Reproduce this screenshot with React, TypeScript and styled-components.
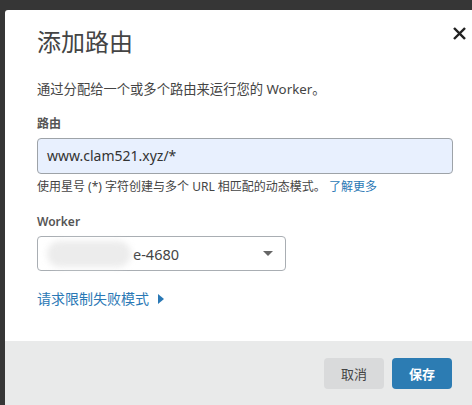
import styled, { createGlobalStyle } from "styled-components"

const Global = createGlobalStyle`
  html, body {
    margin: 0;
    padding: 0;
    background: #333;
    width: 472px;
    height: 405px;
    overflow: hidden;
  }
  * { box-sizing: border-box; }
`;

const Backdrop = styled.div`
  width: 472px;
  height: 405px;
  padding: 10px 0 0 5px;
  background: #363636;
  font-family: "Noto Sans", "Noto Sans CJK SC", sans-serif;
  color: #333;
`;

const Modal = styled.div`
  width: 467px;
  height: 395px;
  background: #fff;
  display: flex;
  flex-direction: column;
  border-radius: 3px 0 0 0;
`;

const Header = styled.div`
  display: flex;
  justify-content: space-between;
  align-items: flex-start;
  padding: 16px 0 0 32px;
  height: 66px;
`;

const Title = styled.h1`
  margin: 0;
  font-size: 24px;
  font-weight: 400;
  color: #444;
  line-height: 32px;
`;

const Close = styled.svg`
  margin-top: 1px;
  width: 13px;
  height: 13px;
  margin-right: 6px;
`;

const Body = styled.div`
  flex: 1;
  padding: 4px 0 0 32px;
  display: flex;
  flex-direction: column;
`;

const Desc = styled.p`
  margin: 0 0 18px;
  font-size: 13.3px;
  line-height: 18px;
  color: #444;
`;

const Label = styled.div`
  font-size: 12px;
  font-weight: 600;
  color: #555;
  line-height: 16px;
  margin-bottom: 6px;
`;

const Input = styled.div`
  width: 416px;
  height: 36px;
  border: 1px solid #9ea3a8;
  border-radius: 4px;
  background: #e8f0fe;
  padding: 0 9px;
  font-size: 14px;
  line-height: 34px;
  color: #333;
`;

const Help = styled.div`
  margin-top: 5px;
  font-size: 12px;
  line-height: 16px;
  color: #444;
  margin-bottom: 19px;
`;

const Link = styled.a<{ $size?: number }>`
  color: #2a78b5;
  font-size: ${p => p.$size || 12}px;
  text-decoration: none;
`;

const Select = styled.div`
  width: 249px;
  height: 35px;
  border: 1px solid #a9aeb3;
  border-radius: 4px;
  background: #fff;
  display: flex;
  align-items: center;
  padding: 0 12px 0 9px;
  font-size: 14.5px;
  color: #444;
`;

const Blur = styled.span`
  display: inline-block;
  width: 84px;
  height: 26px;
  border-radius: 13px;
  background: #ececec;
  filter: blur(3px);
  margin-right: 2px;
`;

const Value = styled.span`
  flex: 1;
  display: flex;
  align-items: center;
`;

const Caret = styled.span`
  width: 0;
  height: 0;
  border-left: 5px solid transparent;
  border-right: 5px solid transparent;
  border-top: 5px solid #666;
`;

const More = styled.div`
  margin-top: 18px;
  display: flex;
  align-items: center;
  gap: 9px;
  line-height: 20px;
`;

const Tri = styled.span`
  width: 0;
  height: 0;
  border-top: 5px solid transparent;
  border-bottom: 5px solid transparent;
  border-left: 6px solid #2a78b5;
`;

const Footer = styled.div`
  height: 64px;
  background: #e9eaea;
  display: flex;
  justify-content: flex-end;
  gap: 8px;
  padding: 17px 20px 0 0;
`;

const Button = styled.button<{ $primary?: boolean }>`
  width: 60px;
  height: 31px;
  border: none;
  border-radius: 4px;
  font-family: inherit;
  font-size: 13px;
  background: ${p => (p.$primary ? "#2c7cb3" : "#d9dadb")};
  color: ${p => (p.$primary ? "#fff" : "#444")};
  font-weight: ${p => (p.$primary ? 600 : 400)};
`;

export default function App() {
  return (
    <Backdrop>
      <Global />
      <Modal>
        <Header>
          <Title>添加路由</Title>
          <Close viewBox="0 0 14 14">
            <path d="M2 2 L12 12 M12 2 L2 12" stroke="#222" strokeWidth="2.6" strokeLinecap="square" />
          </Close>
        </Header>
        <Body>
          <Desc>通过分配给一个或多个路由来运行您的 Worker。</Desc>
          <Label>路由</Label>
          <Input>www.clam521.xyz/*</Input>
          <Help>
            使用星号 (*) 字符创建与多个 URL 相匹配的动态模式。 <Link href="#">了解更多</Link>
          </Help>
          <Label>Worker</Label>
          <Select>
            <Value>
              <Blur />e-4680
            </Value>
            <Caret />
          </Select>
          <More>
            <Link $size={14} href="#">请求限制失败模式</Link>
            <Tri />
          </More>
        </Body>
        <Footer>
          <Button>取消</Button>
          <Button $primary>保存</Button>
        </Footer>
      </Modal>
    </Backdrop>
  );
}
